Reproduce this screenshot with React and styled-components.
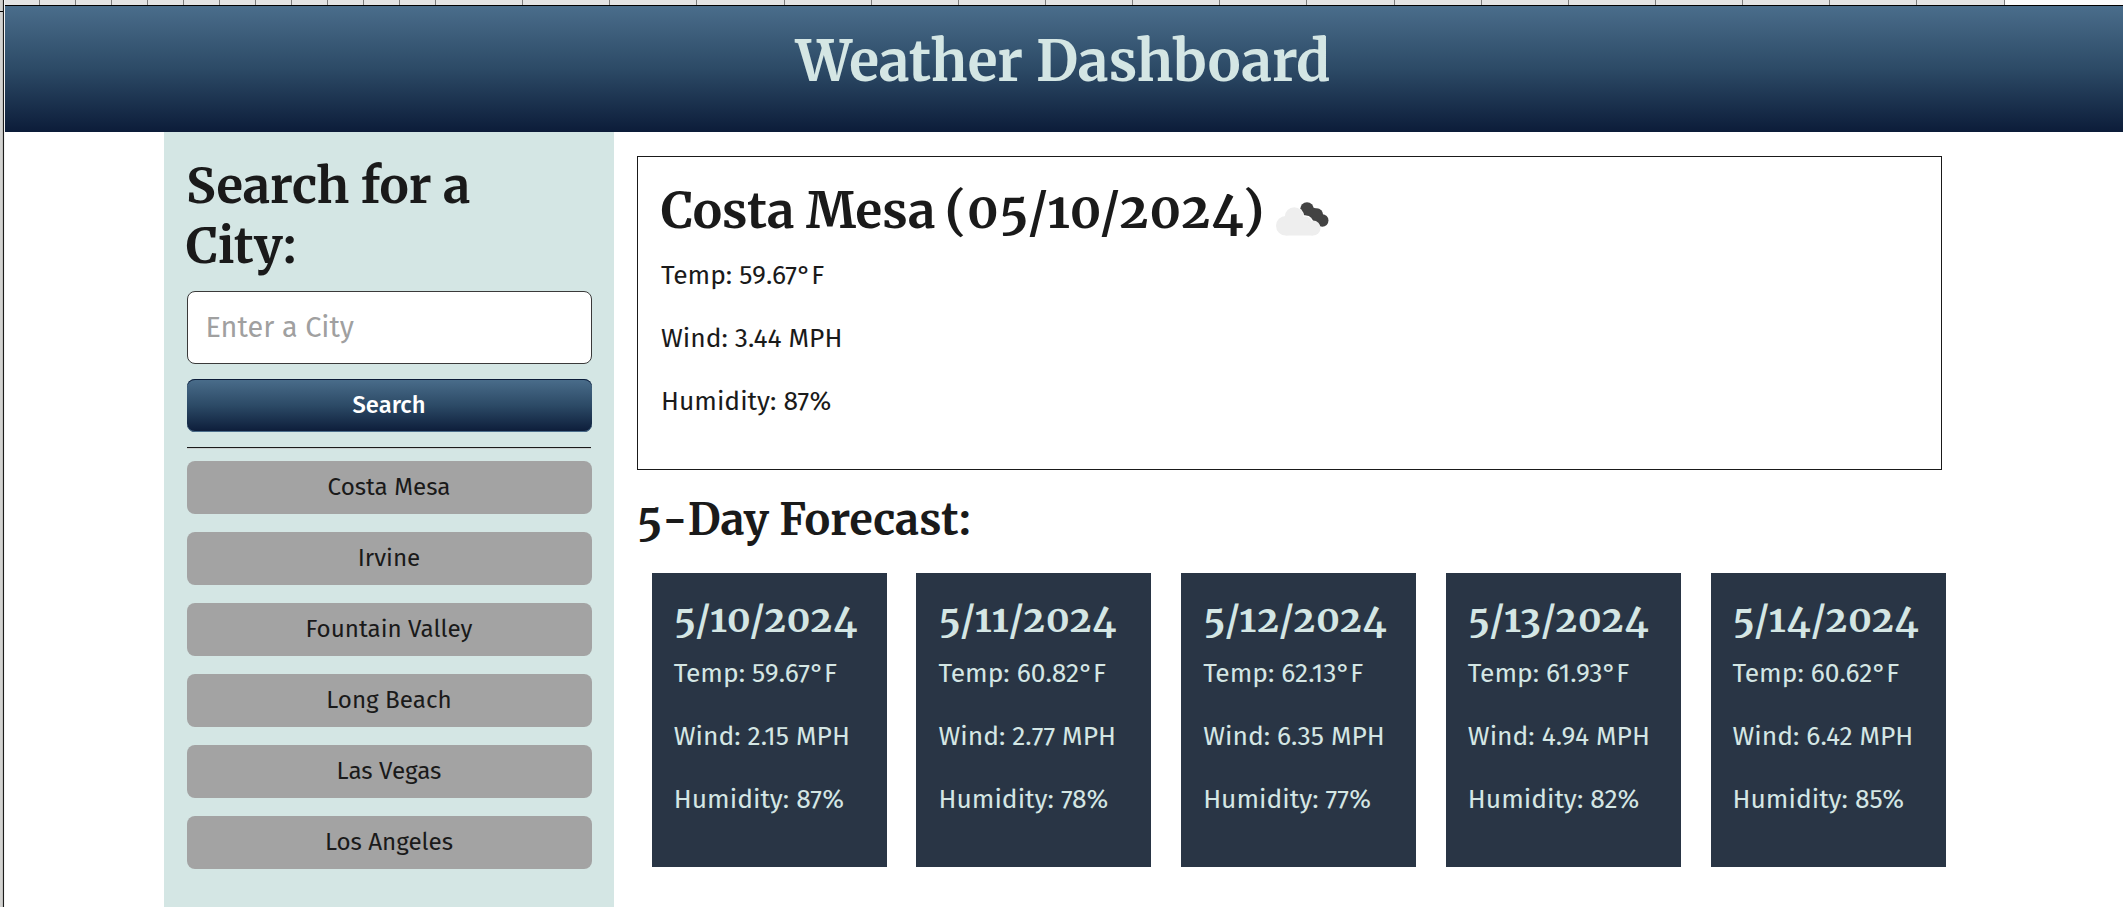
import React from "react";
import styled, { createGlobalStyle } from "styled-components";

const serif = 'Merriweather, "DejaVu Serif Condensed", "DejaVu Serif", serif';
const sans = '"Fira Sans", "Noto Sans", "Open Sans", sans-serif';
const ink = "#1a1a1a";
const mist = "#d4e6e4";
const gradient = "linear-gradient(180deg, #4a6d8b 0%, #2c4a66 50%, #0c1c39 100%)";

const GlobalStyle = createGlobalStyle`
  *, *::before, *::after { box-sizing: border-box; }
  html, body { margin: 0; height: 100%; overflow: hidden; }
  body { background: #fff; color: ${ink}; font-family: ${sans}; }
  h1, h2, h3, p { margin: 0; }
`;

const Window = styled.div`
  display: flex;
  width: 100%;
  height: 100vh;
  overflow: hidden;
`;

const SideEdge = styled.div`
  flex: none;
  width: 5px;
  border-right: 1px solid #f4f4f4;
  background: linear-gradient(90deg, #d2d2d0 0 2px, #c0c0be 2px 3px, #1c1c1c 3px 4px);
`;

const EdgeMark = styled.div`
  width: 3px;
  height: 1px;
  margin-top: 11px;
  background: #000;
`;

const Page = styled.div`
  flex: 1;
  min-width: 0;
  display: flex;
  flex-direction: column;
`;

const TabStrip = styled.div`
  flex: none;
  display: flex;
  height: 6px;
  background: #fcfcfc;
  border-bottom: 1px solid #000;
`;

const Tab = styled.div`
  flex: none;
  width: ${(p) => p.$width}px;
  background: #e3e3e3;
  border-right: 1px solid #7c7c7c;
`;

const Header = styled.header`
  flex: none;
  height: 126px;
  padding: 23px 2px 0 0;
  background: ${gradient};
  text-align: center;
`;

const Title = styled.h1`
  font: 700 55.1px/66px ${serif};
  color: ${mist};
`;

const Content = styled.div`
  flex: 1;
  display: flex;
  padding-left: 159px;
`;

const Sidebar = styled.aside`
  flex: none;
  width: 450px;
  padding: 24px 22px 0 23px;
  background: ${mist};
`;

const SearchHeading = styled.h2`
  font: 700 49px/60.3px ${serif};
  margin: 0 0 14px -1px;
`;

const CityInput = styled.input`
  display: block;
  width: 100%;
  height: 73px;
  padding: 0 17.5px;
  border: 1px solid #3a3a3a;
  border-radius: 8px;
  background: #fff;
  font: 400 28.8px ${sans};
  color: ${ink};
  outline: none;
  &::placeholder { color: #a0a0a0; opacity: 1; }
`;

const Button = styled.button`
  display: flex;
  align-items: center;
  justify-content: center;
  width: 100%;
  height: 53px;
  padding: 0 1px 0 0;
  border: 0;
  border-radius: 8px;
  font: 400 24.2px/30px ${sans};
`;

const SearchButton = styled(Button)`
  margin: 15px 0;
  color: #fff;
  background: ${gradient};
  box-shadow: inset 0 1px 0 #0c1c39, inset 0 -1px 0 #4a6d8b;
  font-weight: 500;
  font-size: 23.8px;
`;

const Divider = styled.hr`
  height: 2px;
  margin: 0 1px 12px 0;
  border: 0;
  border-top: 1px solid #1a1a1a;
  border-bottom: 1px solid #c9d0cf;
`;

const CityList = styled.div`
  display: flex;
  flex-direction: column;
  gap: 18px;
`;

const CityButton = styled(Button)`
  background: #a3a3a3;
  color: ${ink};
`;

const Main = styled.main`
  width: 1305px;
  margin-left: 23px;
  padding-top: 24px;
`;

const Today = styled.section`
  height: 314px;
  padding: 24px 24px 0 23px;
  border: 1px solid ${ink};
`;

const TodayHeading = styled.h2`
  display: flex;
  font: 700 49.2px/60px ${serif};
  font-variant-numeric: oldstyle-nums;
  margin-bottom: 14px;
  white-space: pre;
`;

const City = styled.span`
  letter-spacing: -0.1px;
  margin-right: -2px;
`;

const Figures = styled.span`
  letter-spacing: ${(p) => p.$track || "0.034em"};
  margin: 0 ${(p) => p.$after || "0"} 0 0;
`;

const WeatherIcon = styled.svg`
  flex: none;
  width: 54px;
  height: 34px;
  margin: 21px 0 0 12px;
`;

const Reading = styled.p`
  font: 400 26.4px/40px ${sans};
  margin-bottom: 23px;
  white-space: nowrap;
`;

const ForecastHeading = styled.h2`
  font: 700 43px/52px ${serif};
  font-variant-numeric: oldstyle-nums;
  margin: 24px 0 27px -0.5px;
`;

const Forecast = styled.section`
  display: grid;
  grid-template-columns: repeat(5, 235px);
  column-gap: 29.7px;
  margin-left: 14.8px;
`;

const Day = styled.article`
  height: 294px;
  padding: 23px 22px 0;
  background: #293545;
  color: ${mist};
`;

const DayDate = styled.h3`
  font: 700 36.9px/46px ${serif};
  font-variant-numeric: oldstyle-nums;
  margin-bottom: 11px;
  white-space: nowrap;
`;

const narrow = [35, ...Array(11).fill(36)];
const wide = Array(18).fill(87.15);
const cities = ["Costa Mesa", "Irvine", "Fountain Valley", "Long Beach", "Las Vegas", "Los Angeles"];
const days = [
  { date: "5/10/2024", temp: "59.67", wind: "2.15", humidity: 87 },
  { date: "5/11/2024", temp: "60.82", wind: "2.77", humidity: 78 },
  { date: "5/12/2024", temp: "62.13", wind: "6.35", humidity: 77 },
  { date: "5/13/2024", temp: "61.93", wind: "4.94", humidity: 82 },
  { date: "5/14/2024", temp: "60.62", wind: "6.42", humidity: 85 },
];

const Readings = ({ temp, wind, humidity }) => (
  <>
    <Reading>{`Temp: ${temp}°F`}</Reading>
    <Reading>{`Wind: ${wind} MPH`}</Reading>
    <Reading>{`Humidity: ${humidity}%`}</Reading>
  </>
);

const BrokenClouds = () => (
  <WeatherIcon viewBox="0 0 54 34" aria-hidden="true">
    <g fill="#434343">
      <circle cx="31" cy="7" r="6.8" />
      <circle cx="40.8" cy="12.6" r="6.3" />
      <circle cx="46.3" cy="18.5" r="6.2" />
      <path d="M35.5 5 L40 6.6 L47 14 L44 24 L28 12 Z" />
    </g>
    <g fill="#fff">
      <circle cx="18.2" cy="14.6" r="9.9" />
      <circle cx="30" cy="20.8" r="7.3" />
      <circle cx="36" cy="27" r="7.8" />
    </g>
    <g fill="#eeeeee">
      <circle cx="9.8" cy="23.8" r="9.8" />
      <circle cx="18.2" cy="14.6" r="9.4" />
      <circle cx="29.4" cy="20.8" r="6.4" />
      <circle cx="37" cy="26" r="7.6" />
      <path d="M9.8 18 H31 L37 26 V33.6 H9.8 Z" />
    </g>
  </WeatherIcon>
);

export default function App() {
  return (
    <Window>
      <GlobalStyle />
      <SideEdge>
        <EdgeMark />
      </SideEdge>
      <Page>
        <TabStrip>
          {[...narrow, ...wide].map((w, i) => (
            <Tab key={i} $width={w} />
          ))}
        </TabStrip>
        <Header>
          <Title>Weather Dashboard</Title>
        </Header>
        <Content>
          <Sidebar>
            <SearchHeading>Search for a City:</SearchHeading>
            <CityInput placeholder="Enter a City" />
            <SearchButton>Search</SearchButton>
            <Divider />
            <CityList>
              {cities.map((city) => (
                <CityButton key={city}>{city}</CityButton>
              ))}
            </CityList>
          </Sidebar>
          <Main>
            <Today>
              <TodayHeading>
                <City>{"Costa Mesa "}</City>
                <span>
                  (<Figures $after="-3px">05/10/2024</Figures>)
                </span>
                <BrokenClouds />
              </TodayHeading>
              <Readings temp="59.67" wind="3.44" humidity={87} />
            </Today>
            <ForecastHeading>
              <Figures $track="4px" $after="-3.5px">5-</Figures>Day Forecast:
            </ForecastHeading>
            <Forecast>
              {days.map((day) => (
                <Day key={day.date}>
                  <DayDate>
                    <Figures>{day.date}</Figures>
                  </DayDate>
                  <Readings {...day} />
                </Day>
              ))}
            </Forecast>
          </Main>
        </Content>
      </Page>
    </Window>
  );
}
